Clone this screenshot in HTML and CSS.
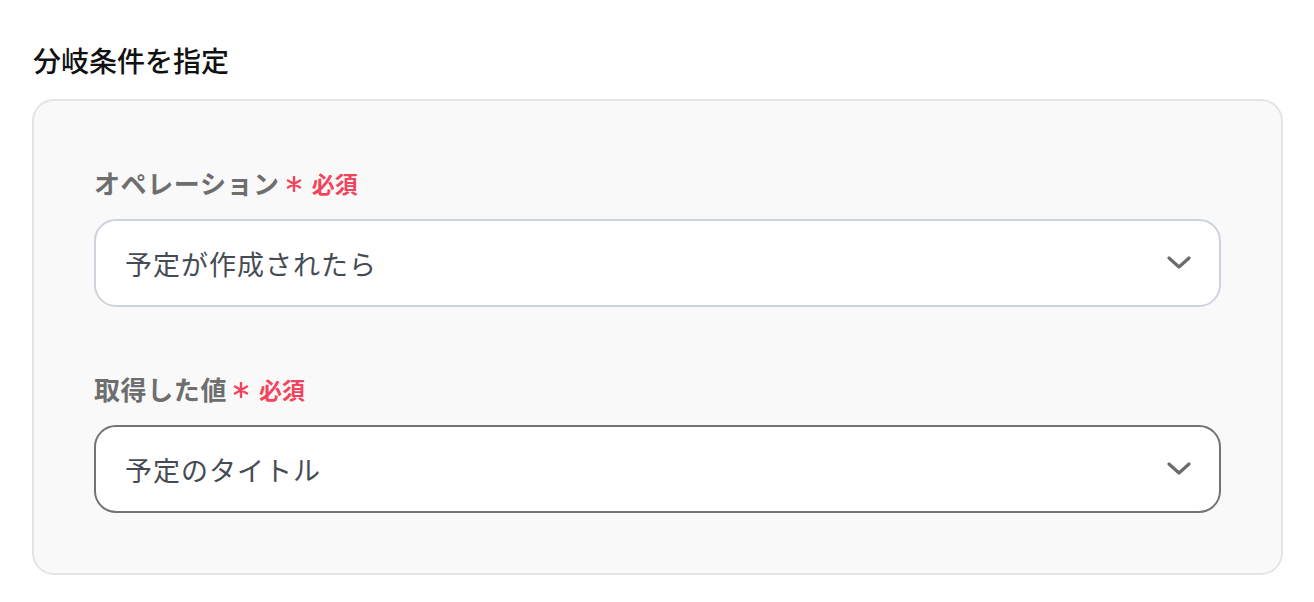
FILE: index.html
```html
<!DOCTYPE html>
<html lang="ja">
<head>
<meta charset="utf-8">
<link rel="stylesheet" href="styles.css">
</head>
<body>
<div class="page">
  <h2 class="title">分岐条件を指定</h2>
  <div class="card">
    <div class="field">
      <div class="label">オペレーション<span class="req"><svg class="ast" width="16" height="16" viewBox="0 0 16 16"><path d="M8 1 V15 M1.94 4.5 L14.06 11.5 M1.94 11.5 L14.06 4.5" stroke="#f2445c" stroke-width="2.4" stroke-linecap="round" fill="none"/></svg>必須</span></div>
      <div class="select">
        <span class="value">予定が作成されたら</span>
        <svg class="chev" width="24" height="14" viewBox="0 0 24 14"><path d="M2 2 L12 11 L22 2" fill="none" stroke="#6b6b6b" stroke-width="3.2" stroke-linecap="round" stroke-linejoin="round"/></svg>
      </div>
    </div>
    <div class="field">
      <div class="label">取得した値<span class="req"><svg class="ast" width="16" height="16" viewBox="0 0 16 16"><path d="M8 1 V15 M1.94 4.5 L14.06 11.5 M1.94 11.5 L14.06 4.5" stroke="#f2445c" stroke-width="2.4" stroke-linecap="round" fill="none"/></svg>必須</span></div>
      <div class="select select-active">
        <span class="value">予定のタイトル</span>
        <svg class="chev" width="24" height="14" viewBox="0 0 24 14"><path d="M2 2 L12 11 L22 2" fill="none" stroke="#6b6b6b" stroke-width="3.2" stroke-linecap="round" stroke-linejoin="round"/></svg>
      </div>
    </div>
  </div>
</div>
</body>
</html>
```
FILE: styles.css
```css
* { box-sizing: border-box; }
html, body { margin: 0; background: #ffffff; }
body {
  font-family: "Noto Sans CJK JP", "Noto Sans", sans-serif;
}
.page {
  padding: 40px 31px 0 32px;
}
.title {
  margin: 0 0 19px 1px;
  font-size: 28px;
  line-height: 40px;
  font-weight: 500;
  color: #111111;
}
.card {
  border: 2px solid #e4e4e4;
  border-radius: 22px;
  background: #f9f9f9;
  padding: 64px 60px 60px 60px;
  display: flex;
  flex-direction: column;
  gap: 64px;
}
.field {
  display: flex;
  flex-direction: column;
  gap: 18px;
}
.label {
  font-size: 26px;
  letter-spacing: 0.6px;
  line-height: 36px;
  font-weight: 700;
  color: #6e6e6e;
  display: flex;
  align-items: center;
}
.req {
  display: inline-flex;
  align-items: center;
  color: #f2445c;
  font-size: 23px;
  letter-spacing: 0;
  font-weight: 700;
  margin-left: 6px;
}
.ast {
  display: block;
  margin-right: 10px;
  position: relative;
  top: 1px;
}
.select {
  height: 88px;
  border: 2px solid #cdd3dd;
  border-radius: 22px;
  background: #ffffff;
  display: flex;
  align-items: center;
  justify-content: space-between;
  padding: 0 28px 0 29px;
}
.select-active {
  border-color: #737373;
}
.value {
  font-size: 27px;
  color: #454b53;
  letter-spacing: 1px;
}
.chev { display: block; }
```
